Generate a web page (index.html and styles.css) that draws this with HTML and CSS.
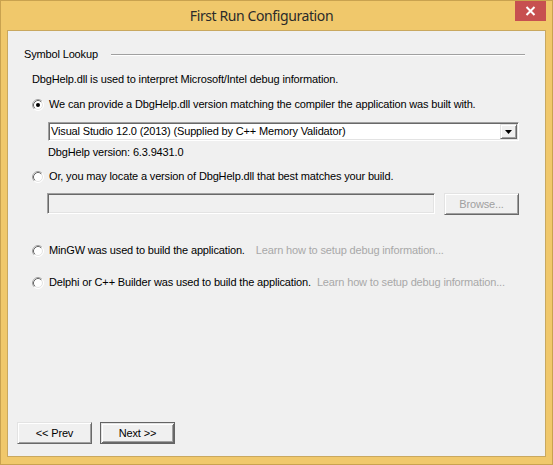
FILE: index.html
```html
<!DOCTYPE html>
<html>
<head>
<meta charset="utf-8">
<link rel="stylesheet" href="styles.css">
</head>
<body>
<div class="window">
  <div class="titlebar">
    <div class="title">First Run Configuration</div>
    <div class="close">
      <svg width="11" height="10" viewBox="0 0 11 10"><path d="M1.5 1 L9.5 9 M9.5 1 L1.5 9" stroke="#fff" stroke-width="2" fill="none"/></svg>
    </div>
  </div>
  <div class="client">
    <div class="group-head"><span>Symbol Lookup</span><div class="etch"></div></div>
    <div class="row desc">DbgHelp.dll is used to interpret Microsoft/Intel debug information.</div>
    <div class="row radio-row r1">
      <svg class="radio" width="12" height="12" viewBox="0 0 12 12"><circle cx="6" cy="6" r="5.5" fill="#fff" stroke="#fff"/><path d="M2.11 9.89 A5.5 5.5 0 0 1 9.89 2.11" stroke="#a0a0a0" fill="none"/><circle cx="6" cy="6" r="4.5" fill="#fff" stroke="#e3e3e3"/><path d="M2.82 9.18 A4.5 4.5 0 0 1 9.18 2.82" stroke="#696969" fill="none"/><circle cx="6" cy="6" r="2" fill="#000"/></svg>
      <span>We can provide a DbgHelp.dll version matching the compiler the application was built with.</span>
    </div>
    <div class="combo">
      <span class="combo-text">Visual Studio 12.0 (2013) (Supplied by C++ Memory Validator)</span>
      <div class="drop"><svg width="7" height="4" viewBox="0 0 7 4"><path d="M0 0 H7 L3.5 4 Z" fill="#000"/></svg></div>
    </div>
    <div class="row version">DbgHelp version: 6.3.9431.0</div>
    <div class="row radio-row r2">
      <svg class="radio" width="12" height="12" viewBox="0 0 12 12"><circle cx="6" cy="6" r="5.5" fill="#fff" stroke="#fff"/><path d="M2.11 9.89 A5.5 5.5 0 0 1 9.89 2.11" stroke="#a0a0a0" fill="none"/><circle cx="6" cy="6" r="4.5" fill="#fff" stroke="#e3e3e3"/><path d="M2.82 9.18 A4.5 4.5 0 0 1 9.18 2.82" stroke="#696969" fill="none"/></svg>
      <span>Or, you may locate a version of DbgHelp.dll that best matches your build.</span>
    </div>
    <div class="edit-row">
      <div class="edit"></div>
      <div class="btn disabled">Browse...</div>
    </div>
    <div class="row radio-row r3">
      <svg class="radio" width="12" height="12" viewBox="0 0 12 12"><circle cx="6" cy="6" r="5.5" fill="#fff" stroke="#fff"/><path d="M2.11 9.89 A5.5 5.5 0 0 1 9.89 2.11" stroke="#a0a0a0" fill="none"/><circle cx="6" cy="6" r="4.5" fill="#fff" stroke="#e3e3e3"/><path d="M2.82 9.18 A4.5 4.5 0 0 1 9.18 2.82" stroke="#696969" fill="none"/></svg>
      <span>MinGW was used to build the application.</span>
      <span class="link l3">Learn how to setup debug information...</span>
    </div>
    <div class="row radio-row r4">
      <svg class="radio" width="12" height="12" viewBox="0 0 12 12"><circle cx="6" cy="6" r="5.5" fill="#fff" stroke="#fff"/><path d="M2.11 9.89 A5.5 5.5 0 0 1 9.89 2.11" stroke="#a0a0a0" fill="none"/><circle cx="6" cy="6" r="4.5" fill="#fff" stroke="#e3e3e3"/><path d="M2.82 9.18 A4.5 4.5 0 0 1 9.18 2.82" stroke="#696969" fill="none"/></svg>
      <span>Delphi or C++ Builder was used to build the application.</span>
      <span class="link l4">Learn how to setup debug information...</span>
    </div>
    <div class="buttons">
      <div class="btn">&lt;&lt; Prev</div>
      <div class="btn default">Next &gt;&gt;</div>
    </div>
  </div>
</div>
</body>
</html>
```

FILE: styles.css
```css
* { box-sizing: border-box; }
html, body { margin: 0; padding: 0; background: #efc76a; }
.window {
  width: 553px;
  height: 465px;
  background: #f0c86b;
  border: 1px solid #c9a24f;
  display: flex;
  flex-direction: column;
}
.titlebar {
  height: 29px;
  display: flex;
  align-items: flex-start;
}
.title {
  flex: 1;
  text-align: center;
  padding-left: 7px;
  font-family: "Noto Sans", sans-serif;
  font-size: 14px;
  letter-spacing: -0.4px;
  line-height: 20px;
  padding-top: 5px;
  color: #2a2a2a;
}
.close {
  width: 31px;
  height: 20px;
  margin-right: 6px;
  background: #c75050;
  display: flex;
  align-items: center;
  justify-content: center;
}
.client {
  margin: 0 6px 7px 6px;
  flex: 1;
  background: #f0f0f0;
  border: 1px solid #c9a85f;
  display: flex;
  flex-direction: column;
  font-family: "Liberation Sans", Arial, sans-serif;
  font-size: 11px;
  letter-spacing: -0.15px;
  line-height: 13px;
  color: #000;
}
.group-head {
  margin-top: 17px;
  height: 13px;
  display: flex;
  align-items: center;
  padding-left: 16px;
}
.etch {
  flex: 1;
  margin-left: 13px;
  margin-right: 20px;
  height: 2px;
  border-top: 1px solid #a0a0a0;
  border-bottom: 1px solid #fff;
}
.row { height: 13px; white-space: nowrap; }
.desc { margin-top: 12px; margin-left: 24px; }
.radio-row { display: flex; align-items: center; margin-left: 24px; }
.radio { flex: none; margin-right: 5px; }
.r1 { margin-top: 12px; }
.combo {
  margin-top: 11px;
  margin-left: 40px;
  width: 471px;
  height: 19px;
  background: #fff;
  border: 1px solid;
  border-color: #a0a0a0 #fff #fff #a0a0a0;
  box-shadow: inset 1px 1px #696969, inset -1px -1px #e3e3e3;
  display: flex;
  align-items: center;
  padding: 1px 1px 1px 2px;
}
.combo-text { flex: 1; white-space: nowrap; }
.drop {
  width: 17px;
  height: 15px;
  background: #f0f0f0;
  border: 1px solid;
  border-color: #e3e3e3 #696969 #696969 #e3e3e3;
  box-shadow: inset 1px 1px #fff, inset -1px -1px #a0a0a0;
  display: flex;
  align-items: center;
  justify-content: center;
}
.version { margin-top: 5px; margin-left: 40px; }
.r2 { margin-top: 11px; }
.edit-row {
  margin-top: 10px;
  margin-left: 39px;
  display: flex;
  align-items: flex-start;
}
.edit {
  width: 388px;
  height: 21px;
  background: #f0f0f0;
  border: 1px solid;
  border-color: #a0a0a0 #fff #fff #a0a0a0;
  box-shadow: inset 1px 1px #696969, inset -1px -1px #e3e3e3;
}
.btn {
  width: 75px;
  height: 22px;
  background: #f0f0f0;
  border: 1px solid;
  border-color: #e3e3e3 #696969 #696969 #e3e3e3;
  box-shadow: inset 1px 1px #fff, inset -1px -1px #a0a0a0;
  display: flex;
  align-items: center;
  justify-content: center;
  white-space: nowrap;
}
.edit-row .btn { margin-left: 9px; }
.btn.disabled { color: #a0a0a0; }
.btn.default {
  border: 1px solid #646464;
  box-shadow: inset 1px 1px #e3e3e3, inset -1px -1px #696969, inset 2px 2px #fff, inset -2px -2px #a0a0a0;
}
.r3 { margin-top: 29px; }
.r4 { margin-top: 19px; }
.link { color: #a8a8a8; }
.l3 { margin-left: 11px; }
.l4 { margin-left: 6px; }
.buttons {
  margin-top: auto;
  margin-bottom: 12px;
  margin-left: 9px;
  display: flex;
  gap: 8px;
}
```
